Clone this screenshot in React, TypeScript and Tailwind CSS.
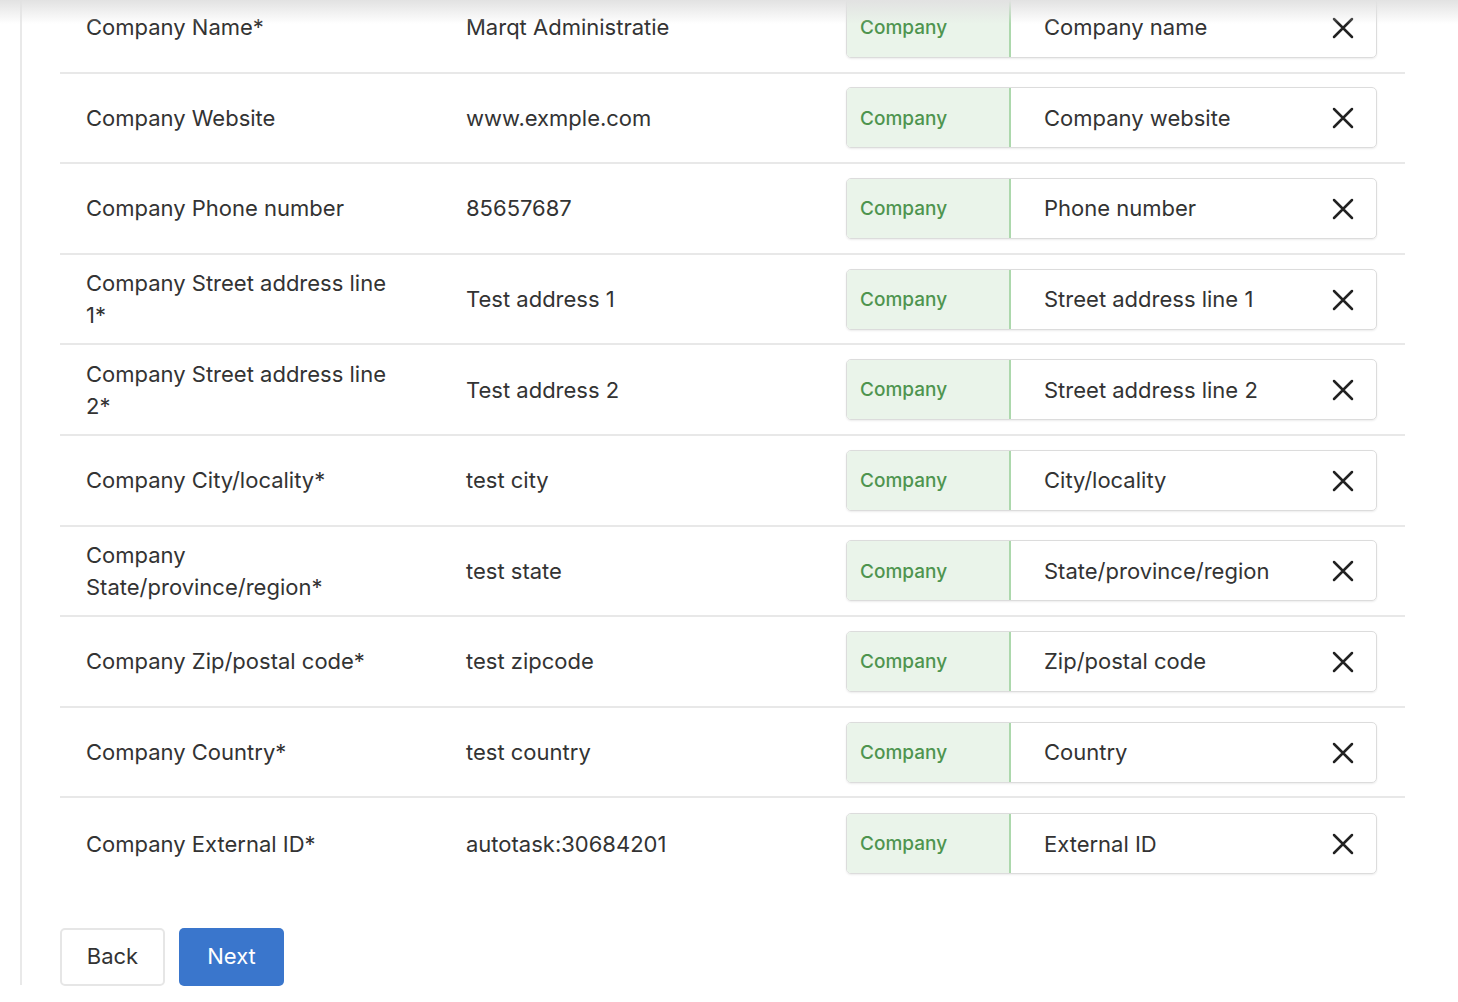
const rows = [
  { label: 'Company Name*', value: 'Marqt Administratie', field: 'Company name' },
  { label: 'Company Website', value: 'www.exmple.com', field: 'Company website' },
  { label: 'Company Phone number', value: '85657687', field: 'Phone number' },
  { label: 'Company Street address line 1*', value: 'Test address 1', field: 'Street address line 1' },
  { label: 'Company Street address line 2*', value: 'Test address 2', field: 'Street address line 2' },
  { label: 'Company City/locality*', value: 'test city', field: 'City/locality' },
  { label: 'Company State/province/region*', value: 'test state', field: 'State/province/region' },
  { label: 'Company Zip/postal code*', value: 'test zipcode', field: 'Zip/postal code' },
  { label: 'Company Country*', value: 'test country', field: 'Country' },
  { label: 'Company External ID*', value: 'autotask:30684201', field: 'External ID' },
];

function CloseIcon() {
  return (
    <svg width="22" height="22" viewBox="0 0 22 22" className="shrink-0 text-[#222]">
      <path d="M2 2 L20 20 M20 2 L2 20" stroke="currentColor" strokeWidth="2.5" strokeLinecap="round" fill="none" />
    </svg>
  );
}

export default function App() {
  return (
    <div
      className="relative h-[1002px] w-[1458px] overflow-hidden bg-white text-[#333]"
      style={{ fontFamily: 'Inter, "Noto Sans", sans-serif' }}
    >
      {/* ombre du header collant */}
      <div className="pointer-events-none absolute inset-x-0 top-0 z-10 h-[24px] bg-gradient-to-b from-[#e2e2e2] to-transparent" />

      <div className="ml-[20px] h-full border-l-2 border-[#e9e9e9] pl-[38px]">
        <div className="-mt-[17px] w-[1345px]">
          {rows.map((r, i) => (
            <div
              key={r.label}
              className={`grid h-[90.6px] grid-cols-[380px_380px_531px] items-center pl-[26px] ${
                i < rows.length - 1 ? 'border-b-2 border-[#e8e8e8]' : ''
              }`}
            >
              <div className="max-w-[312px] text-[22px] leading-[32px]">{r.label}</div>
              <div className="text-[22px] leading-[32px]">{r.value}</div>
              <div className="flex h-[61px] overflow-hidden rounded-[5px] border border-[#dcdcdc] shadow-[0_1px_2px_rgba(0,0,0,0.08)]">
                <div className="flex w-[164px] shrink-0 items-center border-r-2 border-[#acd8ac] bg-[#eaf4ea] pl-[13px] pt-[2px] text-[19px] font-medium text-[#4e944f]">
                  Company
                </div>
                <div className="flex flex-1 items-center justify-between pl-[33px] pr-[22px] pt-[1px] text-[22px]">
                  <span>{r.field}</span>
                  <CloseIcon />
                </div>
              </div>
            </div>
          ))}
        </div>

        <div className="mt-[39px] flex gap-[14px]">
          <button className="h-[58px] w-[105px] rounded-[5px] border-2 border-[#e6e6e6] bg-white text-[22px] text-[#333]">
            Back
          </button>
          <button className="h-[58px] w-[105px] rounded-[5px] bg-[#3a76cc] text-[22px] text-white">
            Next
          </button>
        </div>
      </div>
    </div>
  );
}
